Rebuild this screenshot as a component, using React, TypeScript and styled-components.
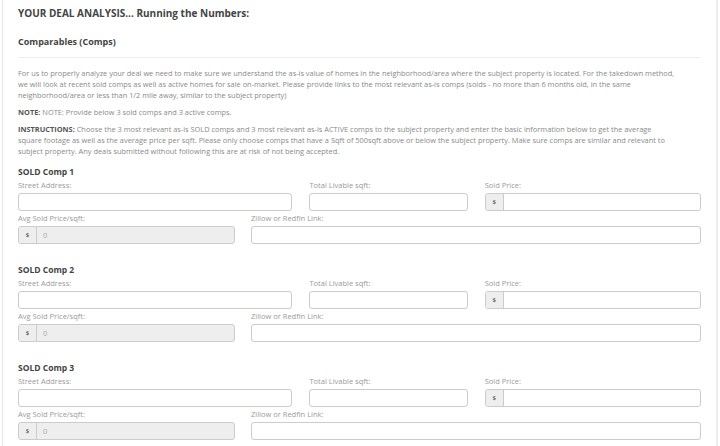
import React from 'react';
import styled, { createGlobalStyle } from 'styled-components';

const GlobalStyle = createGlobalStyle`
  html, body {
    margin: 0;
    padding: 0;
    background: #ffffff;
  }
  body {
    font-family: "Open Sans", "Liberation Sans", sans-serif;
  }
`;

type CompProps = {
  title: string;
};

function SoldComp(props: CompProps) {
  return (
    <Section>
      <CompHeading>{props.title}</CompHeading>
      <TopRow>
        <Field>
          <Label>Street Address:</Label>
          <TextInput />
        </Field>
        <Field>
          <Label>Total Livable sqft:</Label>
          <TextInput />
        </Field>
        <Field>
          <Label>Sold Price:</Label>
          <InputGroup>
            <Addon>$</Addon>
            <GroupInput />
          </InputGroup>
        </Field>
      </TopRow>
      <BottomRow>
        <Field>
          <Label>Avg Sold Price/sqft:</Label>
          <InputGroup disabled>
            <Addon>$</Addon>
            <GroupInput disabled value="0" readOnly />
          </InputGroup>
        </Field>
        <Field>
          <Label>Zillow or Redfin Link:</Label>
          <TextInput />
        </Field>
      </BottomRow>
    </Section>
  );
}

export default function App() {
  return (
    <>
      <GlobalStyle />
      <Panel>
        <Title>YOUR DEAL ANALYSIS... Running the Numbers:</Title>
        <SubTitle>Comparables (Comps)</SubTitle>
        <Divider />
        <Paragraph>
          For us to properly analyze your deal we need to make sure we understand the as-is value of homes in the
          neighborhood/area where the subject property is located. For the takedown method,
          <br />
          we will look at recent sold comps as well as active homes for sale on-market. Please provide links to the
          most relevant as-is comps (solds - no more than 6 months old, in the same
          <br />
          neighborhood/area or less than 1/2 mile away, similar to the subject property)
        </Paragraph>
        <Paragraph>
          <strong>NOTE:</strong> NOTE: Provide below 3 sold comps and 3 active comps.
        </Paragraph>
        <Paragraph>
          <strong>INSTRUCTIONS:</strong> Choose the 3 most relevant as-is SOLD comps and 3 most relevant as-is ACTIVE
          comps to the subject property and enter the basic information below to get the average
          <br />
          square footage as well as the average price per sqft. Please only choose comps that have a Sqft of 500sqft
          above or below the subject property. Make sure comps are similar and relevant to
          <br />
          subject property. Any deals submitted without following this are at risk of not being accepted.
        </Paragraph>
        <SoldComp title="SOLD Comp 1" />
        <SoldComp title="SOLD Comp 2" />
        <SoldComp title="SOLD Comp 3" />
      </Panel>
    </>
  );
}

const Panel = styled.div`
  margin: 0 2px 0 2px;
  padding: 6px 15px 20px 15px;
  border-left: 1px solid #e6e6e6;
  border-right: 2px solid #ececec;
  min-height: 446px;
  box-sizing: border-box;
`;

const Title = styled.h1`
  margin: 0;
  font-size: 10px;
  line-height: 14px;
  font-weight: 700;
  color: #444444;
`;

const SubTitle = styled.h2`
  margin: 15px 0 0 0;
  font-size: 9px;
  line-height: 14px;
  font-weight: 700;
  color: #444444;
`;

const Divider = styled.hr`
  margin: 8px 0 10px 0;
  border: 0;
  border-top: 1px solid #eeeeee;
  height: 0;
`;

const Paragraph = styled.p`
  margin: 0 0 6px 0;
  font-size: 7.4px;
  line-height: 11px;
  color: #8a8a8a;

  strong {
    color: #555555;
    font-weight: 700;
  }
`;

const Section = styled.section`
  margin: 9px 0 20px 0;

  & + & {
    margin-top: 0;
  }
`;

const CompHeading = styled.h3`
  margin: 0;
  font-size: 8.5px;
  line-height: 12px;
  font-weight: 700;
  color: #444444;
`;

const TopRow = styled.div`
  display: grid;
  grid-template-columns: 274fr 158fr 216fr;
  column-gap: 17px;
  margin-top: 2px;
`;

const BottomRow = styled.div`
  display: grid;
  grid-template-columns: 217fr 450fr;
  column-gap: 16px;
  margin-top: 2px;
`;

const Field = styled.div`
  display: flex;
  flex-direction: column;
  min-width: 0;
`;

const Label = styled.label`
  font-size: 7.5px;
  line-height: 10px;
  color: #9a9a9a;
  margin-bottom: 3px;
`;

const TextInput = styled.input`
  box-sizing: border-box;
  height: 18px;
  width: 100%;
  margin: 0;
  border: 1px solid #cccccc;
  border-radius: 3px;
  background: #ffffff;
  outline: none;
`;

const InputGroup = styled.div<{ disabled?: boolean }>`
  display: flex;
  box-sizing: border-box;
  height: 18px;
  border: 1px solid #cccccc;
  border-radius: 3px;
  overflow: hidden;
  background: ${(p) => (p.disabled ? '#eeeeee' : '#ffffff')};
`;

const Addon = styled.span`
  display: flex;
  align-items: center;
  justify-content: center;
  width: 17px;
  flex: none;
  background: #eeeeee;
  border-right: 1px solid #cccccc;
  font-size: 6px;
  font-weight: 700;
  color: #666666;
`;

const GroupInput = styled.input`
  flex: 1;
  min-width: 0;
  margin: 0;
  padding: 0 0 0 6px;
  border: 0;
  outline: none;
  background: transparent;
  font-family: "Open Sans", "Liberation Sans", sans-serif;
  font-size: 7.5px;
  color: #aaaaaa;
`;
